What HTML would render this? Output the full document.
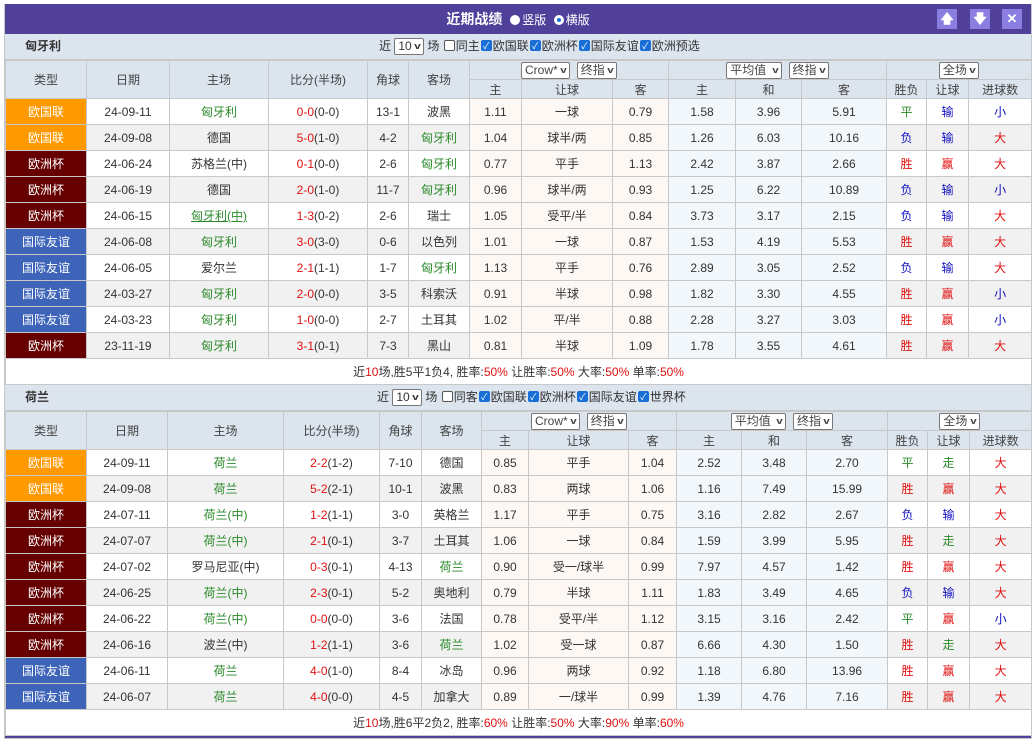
<!DOCTYPE html><html><head><meta charset="utf-8"><style>
body{margin:0;background:#fff;font-family:"Liberation Sans","Noto Sans CJK SC",sans-serif;font-size:12px;color:#333}
#w{position:absolute;left:4px;top:4px;width:1026px;border:1px solid #c8c8c8;border-top:none}
.tt{height:30px;background:#50409a;color:#fff;position:relative;text-align:center;line-height:30px;font-size:14px;font-weight:bold}
.tt .r{font-size:12px;font-weight:normal}
.dot{display:inline-block;width:10px;height:10px;border-radius:50%;background:#fff;vertical-align:-1px;margin:0 2px 0 4px;box-sizing:border-box}
.dot.s{border:3px solid #fff;background:#1a6fd6;box-shadow:0 0 0 1px #1a6fd6 inset}
.btn{position:absolute;top:5px;width:20px;height:20px;background:#8a7ee0;color:#fff;line-height:20px;text-align:center;font-size:13px}
.fr{height:25px;background:#dce4ee;position:relative;line-height:25px;border-bottom:1px solid #c8c8c8}
.fr b{position:absolute;left:20px;font-weight:bold;font-size:12px}
.fr .c{position:absolute;top:0}
.sel{display:inline-block;border:1px solid #777;background:#fff;height:15px;line-height:15px;padding:0 3px;font-size:12px;vertical-align:middle;border-radius:2px}
.v{display:inline-block;font-size:9px;transform:scaleX(1.3);font-weight:bold;vertical-align:1px}
.cb{display:inline-block;width:11px;height:11px;border:1px solid #555;border-radius:2px;background:#fff;vertical-align:middle;margin:-2px 1px 0;box-sizing:border-box}
.cb.k{background:#1a6fd6;border-color:#1a6fd6;color:#fff;font-size:9px;line-height:11px;text-align:center}
table{border-collapse:collapse;table-layout:fixed;width:1026px}
td{border:1px solid #c8c8c8;text-align:center;padding:0;white-space:nowrap;overflow:hidden}
thead td{background:#dce4ee;height:18px;color:#444}
tbody td{height:25px}
tr.g td{background:#f1f1f1}
td.o1,tr.g td.o1{background:#fdf8f4}
td.o2,tr.g td.o2{background:#f1f7fb}
td.t{color:#fff}
.a{background:#ff9900!important}.b{background:#660000!important}.c2{background:#3d64b9!important}
.gn{color:#2a8a2a}.rd{color:#e01010}.bl{color:#1010c0}
.sum td{height:25px;background:#fff}
u{text-decoration:underline}
</style></head><body><div id="w">
<div class="tt">近期战绩 <span class="r"><span class="dot"></span>竖版 <span class="dot s"></span>横版</span>
<div class="btn" style="left:932px">🡅</div><div class="btn" style="left:965px">🡇</div><div class="btn" style="left:997px">✕</div></div>

<div class="fr"><b>匈牙利</b><span class="c" style="left:374px">近 <span class="sel">10 <span class="v">v</span></span> 场 <span class="cb"></span>同主<span class="cb k">✓</span>欧国联<span class="cb k">✓</span>欧洲杯<span class="cb k">✓</span>国际友谊<span class="cb k">✓</span>欧洲预选</span></div>
<table><colgroup><col style="width:81px"><col style="width:83px"><col style="width:99px"><col style="width:99px"><col style="width:41px"><col style="width:61px"><col style="width:52px"><col style="width:91px"><col style="width:56px"><col style="width:67px"><col style="width:66px"><col style="width:85px"><col style="width:40px"><col style="width:42px"><col style="width:63px"></colgroup>
<thead><tr><td rowspan="2">类型</td><td rowspan="2">日期</td><td rowspan="2">主场</td><td rowspan="2">比分(半场)</td><td rowspan="2">角球</td><td rowspan="2">客场</td><td colspan="3"><span class="sel">Crow* <span class="v">v</span></span> &nbsp;<span class="sel">终指 <span class="v">v</span></span></td><td colspan="3"><span class="sel">平均值 &nbsp;<span class="v">v</span></span> &nbsp;<span class="sel">终指 <span class="v">v</span></span></td><td colspan="3"><span class="sel">全场 <span class="v">v</span></span></td></tr>
<tr><td>主</td><td>让球</td><td>客</td><td>主</td><td>和</td><td>客</td><td>胜负</td><td>让球</td><td>进球数</td></tr></thead>
<tbody>
<tr><td class="t a">欧国联</td><td>24-09-11</td><td class="gn">匈牙利</td><td><span class="rd">0-0</span>(0-0)</td><td>13-1</td><td>波黑</td><td class="o1">1.11</td><td class="o1">一球</td><td class="o1">0.79</td><td class="o2">1.58</td><td class="o2">3.96</td><td class="o2">5.91</td><td class="gn">平</td><td class="bl">输</td><td class="bl">小</td></tr>
<tr class="g"><td class="t a">欧国联</td><td>24-09-08</td><td>德国</td><td><span class="rd">5-0</span>(1-0)</td><td>4-2</td><td class="gn">匈牙利</td><td class="o1">1.04</td><td class="o1">球半/两</td><td class="o1">0.85</td><td class="o2">1.26</td><td class="o2">6.03</td><td class="o2">10.16</td><td class="bl">负</td><td class="bl">输</td><td class="rd">大</td></tr>
<tr><td class="t b">欧洲杯</td><td>24-06-24</td><td>苏格兰(中)</td><td><span class="rd">0-1</span>(0-0)</td><td>2-6</td><td class="gn">匈牙利</td><td class="o1">0.77</td><td class="o1">平手</td><td class="o1">1.13</td><td class="o2">2.42</td><td class="o2">3.87</td><td class="o2">2.66</td><td class="rd">胜</td><td class="rd">赢</td><td class="rd">大</td></tr>
<tr class="g"><td class="t b">欧洲杯</td><td>24-06-19</td><td>德国</td><td><span class="rd">2-0</span>(1-0)</td><td>11-7</td><td class="gn">匈牙利</td><td class="o1">0.96</td><td class="o1">球半/两</td><td class="o1">0.93</td><td class="o2">1.25</td><td class="o2">6.22</td><td class="o2">10.89</td><td class="bl">负</td><td class="bl">输</td><td class="bl">小</td></tr>
<tr><td class="t b">欧洲杯</td><td>24-06-15</td><td class="gn"><u>匈牙利(中)</u></td><td><span class="rd">1-3</span>(0-2)</td><td>2-6</td><td>瑞士</td><td class="o1">1.05</td><td class="o1">受平/半</td><td class="o1">0.84</td><td class="o2">3.73</td><td class="o2">3.17</td><td class="o2">2.15</td><td class="bl">负</td><td class="bl">输</td><td class="rd">大</td></tr>
<tr class="g"><td class="t c2">国际友谊</td><td>24-06-08</td><td class="gn">匈牙利</td><td><span class="rd">3-0</span>(3-0)</td><td>0-6</td><td>以色列</td><td class="o1">1.01</td><td class="o1">一球</td><td class="o1">0.87</td><td class="o2">1.53</td><td class="o2">4.19</td><td class="o2">5.53</td><td class="rd">胜</td><td class="rd">赢</td><td class="rd">大</td></tr>
<tr><td class="t c2">国际友谊</td><td>24-06-05</td><td>爱尔兰</td><td><span class="rd">2-1</span>(1-1)</td><td>1-7</td><td class="gn">匈牙利</td><td class="o1">1.13</td><td class="o1">平手</td><td class="o1">0.76</td><td class="o2">2.89</td><td class="o2">3.05</td><td class="o2">2.52</td><td class="bl">负</td><td class="bl">输</td><td class="rd">大</td></tr>
<tr class="g"><td class="t c2">国际友谊</td><td>24-03-27</td><td class="gn">匈牙利</td><td><span class="rd">2-0</span>(0-0)</td><td>3-5</td><td>科索沃</td><td class="o1">0.91</td><td class="o1">半球</td><td class="o1">0.98</td><td class="o2">1.82</td><td class="o2">3.30</td><td class="o2">4.55</td><td class="rd">胜</td><td class="rd">赢</td><td class="bl">小</td></tr>
<tr><td class="t c2">国际友谊</td><td>24-03-23</td><td class="gn">匈牙利</td><td><span class="rd">1-0</span>(0-0)</td><td>2-7</td><td>土耳其</td><td class="o1">1.02</td><td class="o1">平/半</td><td class="o1">0.88</td><td class="o2">2.28</td><td class="o2">3.27</td><td class="o2">3.03</td><td class="rd">胜</td><td class="rd">赢</td><td class="bl">小</td></tr>
<tr class="g"><td class="t b">欧洲杯</td><td>23-11-19</td><td class="gn">匈牙利</td><td><span class="rd">3-1</span>(0-1)</td><td>7-3</td><td>黑山</td><td class="o1">0.81</td><td class="o1">半球</td><td class="o1">1.09</td><td class="o2">1.78</td><td class="o2">3.55</td><td class="o2">4.61</td><td class="rd">胜</td><td class="rd">赢</td><td class="rd">大</td></tr>
<tr class="sum"><td colspan="15">近<span class="rd">10</span>场,胜5平1负4, 胜率:<span class="rd">50%</span> 让胜率:<span class="rd">50%</span> 大率:<span class="rd">50%</span> 单率:<span class="rd">50%</span></td></tr>
</tbody></table>

<div class="fr"><b>荷兰</b><span class="c" style="left:372px">近 <span class="sel">10 <span class="v">v</span></span> 场 <span class="cb"></span>同客<span class="cb k">✓</span>欧国联<span class="cb k">✓</span>欧洲杯<span class="cb k">✓</span>国际友谊<span class="cb k">✓</span>世界杯</span></div>
<table><colgroup><col style="width:81px"><col style="width:81px"><col style="width:116px"><col style="width:96px"><col style="width:42px"><col style="width:60px"><col style="width:47px"><col style="width:100px"><col style="width:48px"><col style="width:65px"><col style="width:65px"><col style="width:81px"><col style="width:40px"><col style="width:42px"><col style="width:62px"></colgroup>
<thead><tr><td rowspan="2">类型</td><td rowspan="2">日期</td><td rowspan="2">主场</td><td rowspan="2">比分(半场)</td><td rowspan="2">角球</td><td rowspan="2">客场</td><td colspan="3"><span class="sel">Crow* <span class="v">v</span></span> &nbsp;<span class="sel">终指 <span class="v">v</span></span></td><td colspan="3"><span class="sel">平均值 &nbsp;<span class="v">v</span></span> &nbsp;<span class="sel">终指 <span class="v">v</span></span></td><td colspan="3"><span class="sel">全场 <span class="v">v</span></span></td></tr>
<tr><td>主</td><td>让球</td><td>客</td><td>主</td><td>和</td><td>客</td><td>胜负</td><td>让球</td><td>进球数</td></tr></thead>
<tbody>
<tr><td class="t a">欧国联</td><td>24-09-11</td><td class="gn">荷兰</td><td><span class="rd">2-2</span>(1-2)</td><td>7-10</td><td>德国</td><td class="o1">0.85</td><td class="o1">平手</td><td class="o1">1.04</td><td class="o2">2.52</td><td class="o2">3.48</td><td class="o2">2.70</td><td class="gn">平</td><td class="gn">走</td><td class="rd">大</td></tr>
<tr class="g"><td class="t a">欧国联</td><td>24-09-08</td><td class="gn">荷兰</td><td><span class="rd">5-2</span>(2-1)</td><td>10-1</td><td>波黑</td><td class="o1">0.83</td><td class="o1">两球</td><td class="o1">1.06</td><td class="o2">1.16</td><td class="o2">7.49</td><td class="o2">15.99</td><td class="rd">胜</td><td class="rd">赢</td><td class="rd">大</td></tr>
<tr><td class="t b">欧洲杯</td><td>24-07-11</td><td class="gn">荷兰(中)</td><td><span class="rd">1-2</span>(1-1)</td><td>3-0</td><td>英格兰</td><td class="o1">1.17</td><td class="o1">平手</td><td class="o1">0.75</td><td class="o2">3.16</td><td class="o2">2.82</td><td class="o2">2.67</td><td class="bl">负</td><td class="bl">输</td><td class="rd">大</td></tr>
<tr class="g"><td class="t b">欧洲杯</td><td>24-07-07</td><td class="gn">荷兰(中)</td><td><span class="rd">2-1</span>(0-1)</td><td>3-7</td><td>土耳其</td><td class="o1">1.06</td><td class="o1">一球</td><td class="o1">0.84</td><td class="o2">1.59</td><td class="o2">3.99</td><td class="o2">5.95</td><td class="rd">胜</td><td class="gn">走</td><td class="rd">大</td></tr>
<tr><td class="t b">欧洲杯</td><td>24-07-02</td><td>罗马尼亚(中)</td><td><span class="rd">0-3</span>(0-1)</td><td>4-13</td><td class="gn">荷兰</td><td class="o1">0.90</td><td class="o1">受一/球半</td><td class="o1">0.99</td><td class="o2">7.97</td><td class="o2">4.57</td><td class="o2">1.42</td><td class="rd">胜</td><td class="rd">赢</td><td class="rd">大</td></tr>
<tr class="g"><td class="t b">欧洲杯</td><td>24-06-25</td><td class="gn">荷兰(中)</td><td><span class="rd">2-3</span>(0-1)</td><td>5-2</td><td>奥地利</td><td class="o1">0.79</td><td class="o1">半球</td><td class="o1">1.11</td><td class="o2">1.83</td><td class="o2">3.49</td><td class="o2">4.65</td><td class="bl">负</td><td class="bl">输</td><td class="rd">大</td></tr>
<tr><td class="t b">欧洲杯</td><td>24-06-22</td><td class="gn">荷兰(中)</td><td><span class="rd">0-0</span>(0-0)</td><td>3-6</td><td>法国</td><td class="o1">0.78</td><td class="o1">受平/半</td><td class="o1">1.12</td><td class="o2">3.15</td><td class="o2">3.16</td><td class="o2">2.42</td><td class="gn">平</td><td class="rd">赢</td><td class="bl">小</td></tr>
<tr class="g"><td class="t b">欧洲杯</td><td>24-06-16</td><td>波兰(中)</td><td><span class="rd">1-2</span>(1-1)</td><td>3-6</td><td class="gn">荷兰</td><td class="o1">1.02</td><td class="o1">受一球</td><td class="o1">0.87</td><td class="o2">6.66</td><td class="o2">4.30</td><td class="o2">1.50</td><td class="rd">胜</td><td class="gn">走</td><td class="rd">大</td></tr>
<tr><td class="t c2">国际友谊</td><td>24-06-11</td><td class="gn">荷兰</td><td><span class="rd">4-0</span>(1-0)</td><td>8-4</td><td>冰岛</td><td class="o1">0.96</td><td class="o1">两球</td><td class="o1">0.92</td><td class="o2">1.18</td><td class="o2">6.80</td><td class="o2">13.96</td><td class="rd">胜</td><td class="rd">赢</td><td class="rd">大</td></tr>
<tr class="g"><td class="t c2">国际友谊</td><td>24-06-07</td><td class="gn">荷兰</td><td><span class="rd">4-0</span>(0-0)</td><td>4-5</td><td>加拿大</td><td class="o1">0.89</td><td class="o1">一/球半</td><td class="o1">0.99</td><td class="o2">1.39</td><td class="o2">4.76</td><td class="o2">7.16</td><td class="rd">胜</td><td class="rd">赢</td><td class="rd">大</td></tr>
<tr class="sum"><td colspan="15">近<span class="rd">10</span>场,胜6平2负2, 胜率:<span class="rd">60%</span> 让胜率:<span class="rd">50%</span> 大率:<span class="rd">90%</span> 单率:<span class="rd">60%</span></td></tr>
</tbody></table>
<div style="height:2px;background:#50409a"></div>
</div></body></html>
